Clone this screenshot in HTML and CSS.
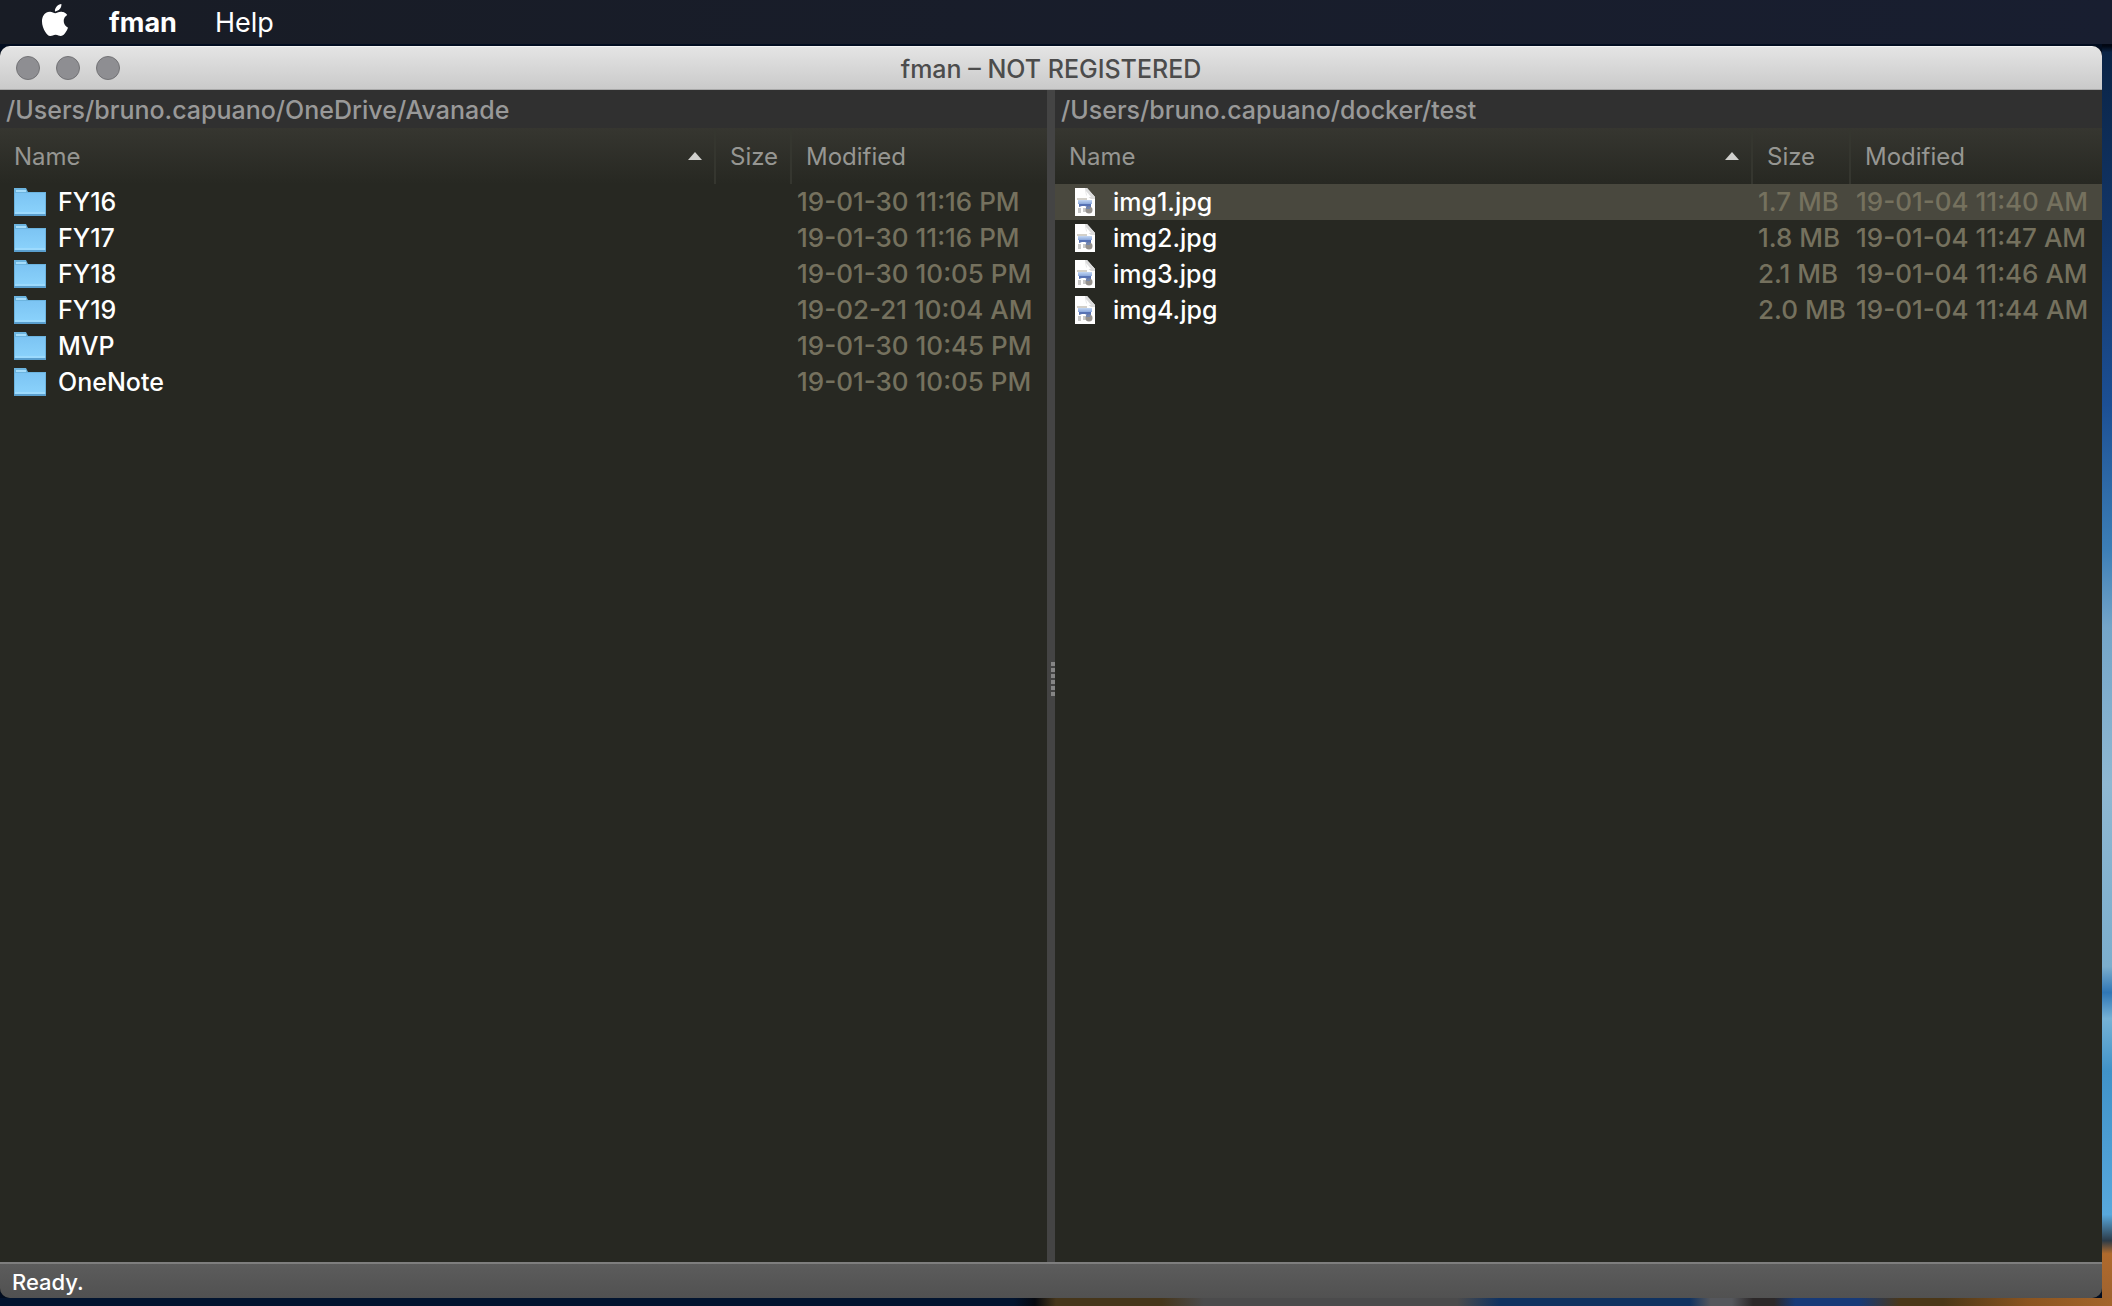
FILE: index.html
```html
<!DOCTYPE html>
<html lang="en">
<head>
    <meta charset="UTF-8">
    <meta name="viewport" content="width=device-width, initial-scale=1.0">
    <title>fman – NOT REGISTERED</title>
    <link rel="stylesheet" href="styles.css">
</head>
<body>
    <!-- Icons shared by the file lists -->
    <svg class="sprite" aria-hidden="true">
        <linearGradient id="folder-fill" x1="0" y1="0" x2="0" y2="1">
            <stop offset="0" stop-color="#7cc4f3"/>
            <stop offset="1" stop-color="#89d1fb"/>
        </linearGradient>
        <linearGradient id="photo-fill" x1="0" y1="0" x2="0" y2="1">
            <stop offset="0" stop-color="#c3d7f3"/>
            <stop offset="1" stop-color="#8ba8dc"/>
        </linearGradient>
        <symbol id="folder" viewBox="0 0 32 28">
            <path fill="#6cb4df" d="M0 0h12l2 4h18v24H0z"/>
            <path fill="#a5dcfa" d="M2 2h10v2H2z"/>
            <path fill="url(#folder-fill)" d="M1 5h30v19H1z"/>
            <path fill="#9cdafd" d="M1 24h30v2H1z"/>
            <path fill="#5a9fce" d="M0 26h32v2H0z"/>
        </symbol>
        <symbol id="file" viewBox="0 0 32 28">
            <path fill="#fff" d="M6 0h12l8 9v19H6z"/>
            <path fill="#dcdcdc" d="M16 0h2l8 9v2h-4l-5-4z"/>
            <path fill="#fff" d="M17 3l5 6h-4z"/>
            <path fill="#d3d0c9" d="M8 10h10v2H8z"/>
            <path fill="url(#photo-fill)" d="M9 12h14v4H9z"/>
            <path fill="#5873b4" d="M10 16h12v3h-4l-2-1h-3l-3 1z"/>
            <path fill="#c9c9c9" d="M9 20h3v5H9zM14 20h3v4h-3z"/>
            <circle cx="20" cy="22" r="3.5" fill="#95918d"/>
            <path fill="#7587ad" d="M17 19h4v2h-4z"/>
        </symbol>
    </svg>

    <nav class="menubar">
        <button class="apple" aria-label="Apple menu">
            <svg viewBox="0 0 24 24" width="32" height="32"><path fill="#fff" d="M12.152 6.896c-.948 0-2.415-1.078-3.96-1.04-2.04.027-3.91 1.183-4.961 3.014-2.117 3.675-.546 9.103 1.519 12.09 1.013 1.454 2.208 3.09 3.792 3.039 1.52-.065 2.09-.987 3.935-.987 1.831 0 2.35.987 3.96.948 1.637-.026 2.676-1.48 3.676-2.948 1.156-1.688 1.636-3.325 1.662-3.415-.039-.013-3.182-1.221-3.22-4.857-.026-3.04 2.48-4.494 2.597-4.559-1.429-2.09-3.623-2.324-4.39-2.376-2-.156-3.675 1.09-4.61 1.09zM15.53 3.83c.843-1.012 1.4-2.427 1.245-3.83-1.207.052-2.662.805-3.532 1.818-.78.896-1.454 2.338-1.273 3.714 1.338.104 2.715-.688 3.559-1.701"/></svg>
        </button>
        <button class="app-name">fman</button>
        <button>Help</button>
    </nav>

    <div class="window">
        <header class="titlebar">
            <div class="lights">
                <button aria-label="Close"></button>
                <button aria-label="Minimize"></button>
                <button aria-label="Zoom"></button>
            </div>
            <h1>fman – NOT REGISTERED</h1>
        </header>

        <main class="panes">
            <section class="pane">
                <input class="path" type="text" aria-label="Left location" value="/Users/bruno.capuano/OneDrive/Avanade" readonly>
                <table>
                    <colgroup><col><col class="col-size-empty"><col class="col-date-wide"></colgroup>
                    <thead>
                        <tr>
                            <th aria-sort="ascending"><button>Name<span class="arrow"></span></button></th>
                            <th><button>Size</button></th>
                            <th><button>Modified</button></th>
                        </tr>
                    </thead>
                    <tbody>
                        <tr><td><div class="name"><svg><use href="#folder"/></svg>FY16</div></td><td></td><td>19-01-30 11:16 PM</td></tr>
                        <tr><td><div class="name"><svg><use href="#folder"/></svg>FY17</div></td><td></td><td>19-01-30 11:16 PM</td></tr>
                        <tr><td><div class="name"><svg><use href="#folder"/></svg>FY18</div></td><td></td><td>19-01-30 10:05 PM</td></tr>
                        <tr><td><div class="name"><svg><use href="#folder"/></svg>FY19</div></td><td></td><td>19-02-21 10:04 AM</td></tr>
                        <tr><td><div class="name"><svg><use href="#folder"/></svg>MVP</div></td><td></td><td>19-01-30 10:45 PM</td></tr>
                        <tr><td><div class="name"><svg><use href="#folder"/></svg>OneNote</div></td><td></td><td>19-01-30 10:05 PM</td></tr>
                    </tbody>
                </table>
            </section>

            <div class="splitter"><span class="grip"></span></div>

            <section class="pane">
                <input class="path" type="text" aria-label="Right location" value="/Users/bruno.capuano/docker/test" readonly>
                <table>
                    <colgroup><col><col class="col-size"><col class="col-date"></colgroup>
                    <thead>
                        <tr>
                            <th aria-sort="ascending"><button>Name<span class="arrow"></span></button></th>
                            <th><button>Size</button></th>
                            <th><button>Modified</button></th>
                        </tr>
                    </thead>
                    <tbody>
                        <tr class="current"><td><div class="name"><svg><use href="#file"/></svg>img1.jpg</div></td><td>1.7 MB</td><td>19-01-04 11:40 AM</td></tr>
                        <tr><td><div class="name"><svg><use href="#file"/></svg>img2.jpg</div></td><td>1.8 MB</td><td>19-01-04 11:47 AM</td></tr>
                        <tr><td><div class="name"><svg><use href="#file"/></svg>img3.jpg</div></td><td>2.1 MB</td><td>19-01-04 11:46 AM</td></tr>
                        <tr><td><div class="name"><svg><use href="#file"/></svg>img4.jpg</div></td><td>2.0 MB</td><td>19-01-04 11:44 AM</td></tr>
                    </tbody>
                </table>
            </section>
        </main>

        <footer class="statusbar">Ready.</footer>
    </div>
</body>
</html>
```
FILE: styles.css
```css
* {
    box-sizing: border-box;
}
body {
    margin: 0;
    height: 100vh;
    display: flex;
    flex-direction: column;
    font-family: Inter, "Liberation Sans", sans-serif;
    font-size: 25px;
    font-weight: 500;
    color: #fff;
    /* wallpaper showing below and to the right of the window */
    background:
        linear-gradient(to right, #02142f 0 48%, #05080f 49%, #46361b 50% 55%, #4b4b4c 57% 69%, #103260 71% 80%, #55575c 81% 82%, #2c2829 83% 84%, #173a78 85% 88%, #4b3718 90% 92%, #8a5420 96%, #a4652b 100%) bottom / 100% 8px no-repeat,
        linear-gradient(to bottom, #020713 0 46px, #0a2446 4%, #123669 18%, #1c4f94 31%, #3c7eb6 42%, #74a5c8 48%, #8fb8d2 60%, #7caecd 74%, #2f76b5 76%, #76b2d5 78%, #4092c8 82%, #58a8dc 93%, #2c3b48 95%, #b06a2c 96%, #9d6230 100%) right / 10px 100% no-repeat,
        #020d20;
}
button {
    padding: 0;
    border: 0;
    background: none;
    color: inherit;
    font: inherit;
}
.sprite {
    position: absolute;
    width: 0;
    height: 0;
}

/* Menu bar */
.menubar {
    display: flex;
    align-items: center;
    gap: 38px;
    height: 44px;
    padding-left: 39px;
    background: linear-gradient(to right, #181c25, #181e30);
    font-size: 27px;
    font-weight: 400;
}
.menubar .app-name {
    font-weight: 700;
}
.apple svg {
    display: block;
    margin-bottom: 4px;
}

/* Window */
.window {
    flex: 1;
    display: flex;
    flex-direction: column;
    min-height: 0;
    margin: 2px 10px 8px 0;
    border-radius: 10px;
    overflow: hidden;
    background: #272822;
}
.titlebar {
    display: grid;
    grid-template-columns: 1fr auto 1fr;
    align-items: center;
    height: 44px;
    padding: 0 16px;
    background: linear-gradient(#e4e4e4, #cacaca);
    border-top: 1px solid #f4f4f4;
    border-bottom: 1px solid #a9a9a9;
}
.titlebar h1 {
    margin: 0;
    padding-top: 2px;
    font-size: 25px;
    font-weight: 500;
    color: #4c4c4c;
}
.lights {
    display: flex;
    gap: 16px;
}
.lights button {
    width: 24px;
    height: 24px;
    border: 1px solid #737376;
    border-radius: 50%;
    background: #8e8e92;
}

/* Panes */
.panes {
    flex: 1;
    display: flex;
    min-height: 0;
}
.pane {
    flex: 1;
    min-width: 0;
}
.path {
    display: block;
    width: 100%;
    height: 38px;
    padding: 2px 6px 0;
    border: 0;
    outline: 0;
    background: #303030;
    color: #999;
    font: inherit;
}
.splitter {
    display: flex;
    align-items: center;
    justify-content: flex-end;
    width: 8px;
    padding-top: 6px;
    background: #444;
}
.grip {
    width: 4px;
    height: 34px;
    background: repeating-linear-gradient(#858585 0 4px, transparent 4px 6px);
}

/* File list */
table {
    width: 100%;
    table-layout: fixed;
    border-collapse: collapse;
}
.col-size-empty {
    width: 76px;
}
.col-size {
    width: 98px;
}
.col-date {
    width: 252px;
}
.col-date-wide {
    width: 256px;
}
thead {
    background: linear-gradient(#363630, #272822);
}
th {
    height: 56px;
    padding: 0;
    border-right: 2px solid #35362f;
    font-size: 24px;
    font-weight: 400;
    color: #969692;
}
th:last-child {
    border-right: 0;
}
th button {
    display: flex;
    align-items: center;
    justify-content: space-between;
    width: 100%;
    padding: 0 12px 0 14px;
}
.arrow {
    width: 14px;
    height: 8px;
    background: #d0d0cd;
    clip-path: polygon(50% 0, 100% 100%, 0 100%);
}
td {
    height: 36px;
    padding: 0 0 0 6px;
    font-size: 26px;
    line-height: 32px;
    color: #75715e;
    white-space: nowrap;
}
.name {
    display: flex;
    align-items: center;
    gap: 12px;
    padding-left: 8px;
    font-size: 25px;
    color: #fff;
}
.name svg {
    width: 32px;
    height: 28px;
}
.current {
    background: #49483e;
}

.statusbar {
    height: 36px;
    padding-left: 12px;
    border-top: 2px solid #7e7e7e;
    background: linear-gradient(#5c5c5c, #515151);
    font-size: 22px;
    line-height: 36px;
}
```
